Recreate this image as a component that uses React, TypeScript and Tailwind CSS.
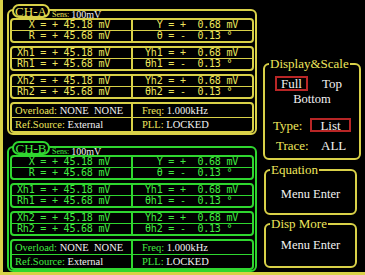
type Theme = {
    box: string;
    text: string;
};

const yellow: Theme = {
    box: 'border-[#d9d148]',
    text: 'text-[#eee65c]',
};

const green: Theme = {
    box: 'border-[#2fd62f]',
    text: 'text-[#42ec42]',
};

const serif = "font-['Liberation_Serif',serif]";
const mono = "font-['DejaVu_Sans_Mono',monospace]";

const dataGroups = [
    [
        ['  X = + 45.18 mV', '  Y = +  0.68 mV'],
        ['  R = + 45.68 mV', '  θ = -  0.13 °'],
    ],
    [
        ['Xh1 = + 45.18 mV', 'Yh1 = +  0.68 mV'],
        ['Rh1 = + 45.68 mV', 'θh1 = -  0.13 °'],
    ],
    [
        ['Xh2 = + 45.18 mV', 'Yh2 = +  0.68 mV'],
        ['Rh2 = + 45.68 mV', 'θh2 = -  0.13 °'],
    ],
];

const statusRows = [
    [
        ['Overload:', 'NONE  NONE'],
        ['Freq:', '1.000kHz'],
    ],
    [
        ['Ref.Source:', 'External'],
        ['PLL:', 'LOCKED'],
    ],
];

const Channel = ({ name, theme, className }: { name: string; theme: Theme; className: string }) => {
    return (
        <div className={`relative rounded-[6px] border-2 px-px ${theme.box} ${className}`}>
            <div
                className={`absolute left-[3px] top-[-7px] flex h-[14px] w-[38px] items-center justify-center whitespace-nowrap rounded-[7px] border-2 bg-black text-[13px] leading-none ${serif} ${theme.box} ${theme.text}`}
            >
                {name}
            </div>
            <div className={`flex h-[7px] items-center pl-[42px] leading-none ${serif}`}>
                <span className={`text-[8px] ${theme.text}`}>Sens:</span>
                <span className="ml-[2px] text-[10px] text-[#f2f2f2]">100mV</span>
            </div>

            <div className="flex flex-col gap-[3px]">
                {dataGroups.map((group, gi) => (
                    <div key={gi} className={`rounded-[4px] border-2 ${theme.box}`}>
                        {group.map((row, ri) => (
                            <div
                                key={ri}
                                className={`grid grid-cols-[121px_1fr] ${ri > 0 ? 'border-t' : ''} ${theme.box}`}
                            >
                                <div
                                    className={`whitespace-pre border-r-2 pl-[5px] text-[10px] leading-[10px] tracking-[-0.2px] ${mono} ${theme.box} ${theme.text}`}
                                >
                                    {row[0]}
                                </div>
                                <div
                                    className={`whitespace-pre pl-[12px] text-[10px] leading-[10px] tracking-[-0.2px] ${mono} ${theme.text}`}
                                >
                                    {row[1]}
                                </div>
                            </div>
                        ))}
                    </div>
                ))}

                <div className={`rounded-[4px] border-2 ${theme.box}`}>
                    {statusRows.map((row, ri) => (
                        <div
                            key={ri}
                            className={`grid grid-cols-[121px_1fr] text-[10.5px] leading-[13px] ${serif} ${ri > 0 ? 'border-t' : ''} ${theme.box}`}
                        >
                            <div className={`whitespace-pre border-r-2 pl-[3px] ${theme.box}`}>
                                <span className={theme.text}>{row[0][0]}</span>{' '}
                                <span className="text-[#f2f2f2]">{row[0][1]}</span>
                            </div>
                            <div className="whitespace-pre pl-[9px]">
                                <span className={theme.text}>{row[1][0]}</span>{' '}
                                <span className="text-[#f2f2f2]">{row[1][1]}</span>
                            </div>
                        </div>
                    ))}
                </div>
            </div>
        </div>
    );
};

const Panel = ({
    title,
    className,
    children,
}: {
    title: string;
    className: string;
    children: React.ReactNode;
}) => {
    return (
        <fieldset className={`rounded-[6px] border-2 border-[#d9d148] ${className}`}>
            <legend className="ml-[4px] px-px text-[13px] leading-[14px] text-[#eee65c]">{title}</legend>
            {children}
        </fieldset>
    );
};

const App = () => {
    return (
        <div
            className={`flex h-[275px] w-[365px] overflow-hidden border-b-[3px] border-l-[3px] border-[#d9d148] bg-black ${serif}`}
        >
            <div className="ml-[4px] flex w-[250px] flex-col">
                <Channel name="CH-A" theme={yellow} className="mt-[9px]" />
                <Channel name="CH-B" theme={green} className="mt-[11px]" />
            </div>

            <div className="flex flex-col">
                <Panel title="Display&Scale" className="ml-[6px] mt-[57px] w-[98px] pb-[6px]">
                    <div className="ml-[10px] mt-[5px] flex items-center text-[13px] text-[#f2f2f2]">
                        <div className="flex h-[15px] w-[33px] items-center justify-center border-2 border-[#b82626] leading-none">
                            Full
                        </div>
                        <span className="ml-[14px] leading-none">Top</span>
                    </div>
                    <div className="mt-px text-center text-[12.5px] leading-[14px] text-[#f2f2f2]">Bottom</div>
                    <div className="ml-[8px] mt-[12px] flex h-[14px] items-center text-[13px]">
                        <span className="w-[37px] leading-none text-[#eee65c]">Type:</span>
                        <div className="flex h-[14px] w-[41px] items-center justify-center border-2 border-[#b82626] leading-none text-[#f2f2f2]">
                            List
                        </div>
                    </div>
                    <div className="ml-[11px] mt-[6px] flex h-[14px] items-center text-[13px]">
                        <span className="w-[45px] leading-none text-[#eee65c]">Trace:</span>
                        <span className="leading-none text-[#f2f2f2]">ALL</span>
                    </div>
                </Panel>

                <Panel title="Equation" className="ml-[7px] mt-[3px] w-[93px] pb-[11px]">
                    <div className="mt-[9px] text-center text-[12.5px] leading-[16px] text-[#f2f2f2]">Menu Enter</div>
                </Panel>

                <Panel title="Disp More" className="ml-[7px] mt-[2px] w-[93px] pb-[13px]">
                    <div className="mt-[6px] text-center text-[12.5px] leading-[16px] text-[#f2f2f2]">Menu Enter</div>
                </Panel>
            </div>
        </div>
    );
};

export default App;
